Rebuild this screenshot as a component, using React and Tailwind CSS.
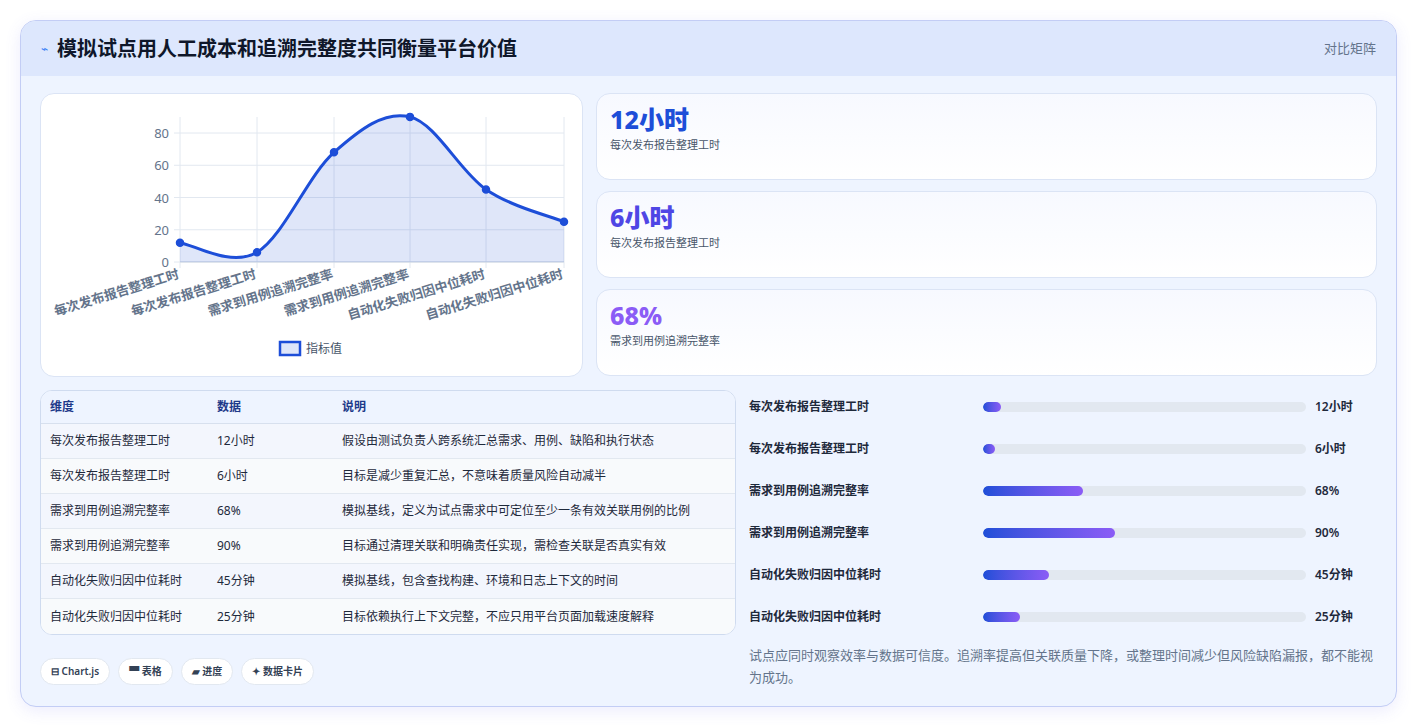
import React from "react";

const F = { fontFamily: '"Noto Sans", "Noto Sans CJK SC", sans-serif' };

const labels = ["每次发布报告整理工时","每次发布报告整理工时","需求到用例追溯完整率","需求到用例追溯完整率","自动化失败归因中位耗时","自动化失败归因中位耗时"];
const vals = [12, 6, 68, 90, 45, 25];
const xs = [139, 216, 293, 369, 445, 523];
const y = (v) => 168 - v * 1.6125;

function Chart() {
  const pts = vals.map((v, i) => [xs[i], y(v)]);
  let d = `M${pts[0][0]},${pts[0][1]}`;
  for (let i = 0; i < pts.length - 1; i++) {
    const p0 = pts[i - 1] || pts[i], p1 = pts[i], p2 = pts[i + 1], p3 = pts[i + 2] || p2;
    const t = 0.17;
    const c1 = [p1[0] + (p2[0] - p0[0]) * t, p1[1] + (p2[1] - p0[1]) * t];
    const c2 = [p2[0] - (p3[0] - p1[0]) * t, p2[1] - (p3[1] - p1[1]) * t];
    d += ` C${c1[0]},${c1[1]} ${c2[0]},${c2[1]} ${p2[0]},${p2[1]}`;
  }
  const area = d + ` L523,168 L139,168 Z`;
  return (
    <svg width="542" height="283" style={F}>
      {[0, 20, 40, 60, 80].map((v) => (
        <g key={v}>
          <line x1="133" x2="523" y1={y(v)} y2={y(v)} stroke="#e2e8f0" />
          <text x="128" y={y(v) + 5} textAnchor="end" fontSize="13" fill="#64748b">{v}</text>
        </g>
      ))}
      {xs.map((x, i) => (
        <line key={i} x1={x} x2={x} y1="23" y2="174" stroke="#e2e8f0" />
      ))}
      <line x1="139" x2="523" y1="168" y2="168" stroke="#cbd5e1" />
      <path d={area} fill="rgba(29,78,216,0.14)" />
      <path d={d} fill="none" stroke="#1d4ed8" strokeWidth="3" />
      {pts.map((p, i) => (
        <circle key={i} cx={p[0]} cy={p[1]} r="3.5" fill="#1d4ed8" stroke="#1d4ed8" strokeWidth="1.5" />
      ))}
      {labels.map((l, i) => (
        <text key={i} x={xs[i]} y="184" fontSize="13" fontWeight="600" fill="#64748b" textAnchor="end" transform={`rotate(-17 ${xs[i]} 184)`}>{l}</text>
      ))}
      <rect x="239" y="248" width="20" height="13" fill="rgba(29,78,216,0.14)" stroke="#1d4ed8" strokeWidth="2.5" />
      <text x="265" y="259" fontSize="12" fill="#475569">指标值</text>
    </svg>
  );
}

const stats = [
  ["12小时", "text-[#1d4ed8]"],
  ["6小时", "text-[#4f46e5]"],
  ["68%", "text-[#8b5cf6]"],
];
const statLabels = ["每次发布报告整理工时", "每次发布报告整理工时", "需求到用例追溯完整率"];

const rows = [
  ["每次发布报告整理工时", "12小时", "假设由测试负责人跨系统汇总需求、用例、缺陷和执行状态"],
  ["每次发布报告整理工时", "6小时", "目标是减少重复汇总，不意味着质量风险自动减半"],
  ["需求到用例追溯完整率", "68%", "模拟基线，定义为试点需求中可定位至少一条有效关联用例的比例"],
  ["需求到用例追溯完整率", "90%", "目标通过清理关联和明确责任实现，需检查关联是否真实有效"],
  ["自动化失败归因中位耗时", "45分钟", "模拟基线，包含查找构建、环境和日志上下文的时间"],
  ["自动化失败归因中位耗时", "25分钟", "目标依赖执行上下文完整，不应只用平台页面加载速度解释"],
];
const barW = [18, 12, 100, 132, 66, 37];

export default function App() {
  return (
    <div className="w-[1417px] h-[727px] bg-white pt-[20px] pl-[20px]" style={F}>
      <div className="w-[1377px] h-[687px] rounded-[16px] border border-[#c3cdf5] bg-[#eef4ff] overflow-hidden shadow-[0_4px_16px_rgba(99,102,241,0.12)]">
        <div className="h-[55px] bg-[#dde7fd] flex items-center justify-between px-[20px]">
          <div className="flex items-center gap-[9px]">
            <span className="text-[12px] text-[#3b82f6]">⌁</span>
            <span className="text-[20px] font-bold text-[#0f172a]">模拟试点用人工成本和追溯完整度共同衡量平台价值</span>
          </div>
          <span className="text-[13px] text-[#64748b]">对比矩阵</span>
        </div>
        <div className="px-[19px] pt-[17px]">
          <div className="flex gap-[13px]">
            <div className="w-[543px] h-[284px] bg-white rounded-[14px] border border-[#dbe4f5] overflow-hidden">
              <Chart />
            </div>
            <div className="flex-1 flex flex-col gap-[11px]">
              {stats.map(([v, c], i) => (
                <div key={i} className="h-[87px] rounded-[14px] border border-[#dbe4f5] bg-gradient-to-b from-[#f7f9ff] to-white px-[13px] pt-[9px]">
                  <div className={`text-[25px] font-extrabold leading-[32px] ${c}`}>{v}</div>
                  <div className="text-[11px] text-[#475569] mt-[2px]">{statLabels[i]}</div>
                </div>
              ))}
            </div>
          </div>
          <div className="flex gap-[13px] mt-[13px]">
            <div className="w-[696px]">
              <div className="rounded-[12px] border border-[#cfdbef] overflow-hidden bg-white text-[12px]">
                <div className="flex h-[33px] items-center bg-[#eef4ff] border-b border-[#d7e0ee] text-[#1e3a8a] font-semibold">
                  <div className="w-[176px] pl-[9px]">维度</div>
                  <div className="w-[125px]">数据</div>
                  <div>说明</div>
                </div>
                {rows.map((r, i) => (
                  <div key={i} className={`flex h-[35px] items-center text-[#1e293b] ${i < 5 ? "border-b border-[#e2e8f0]" : ""} ${i % 2 ? "bg-[#f8fafc]" : "bg-[#f3f6fd]"}`}>
                    <div className="w-[176px] pl-[9px]">{r[0]}</div>
                    <div className="w-[125px]">{r[1]}</div>
                    <div>{r[2]}</div>
                  </div>
                ))}
              </div>
              <div className="flex gap-[8px] mt-[23px] text-[10px] text-[#334155] font-semibold">
                <span className="px-[10px] h-[27px] flex items-center rounded-full bg-white border border-[#e2e8f0]">⊟ Chart.js</span>
                <span className="px-[10px] h-[27px] flex items-center rounded-full bg-white border border-[#e2e8f0]">▀ 表格</span>
                <span className="px-[10px] h-[27px] flex items-center rounded-full bg-white border border-[#e2e8f0]">▰ 进度</span>
                <span className="px-[10px] h-[27px] flex items-center rounded-full bg-white border border-[#e2e8f0]">✦ 数据卡片</span>
              </div>
            </div>
            <div className="flex-1 -mt-[4px]">
              <div className="flex flex-col">
                {rows.map((r, i) => (
                  <div key={i} className="h-[42px] flex items-center text-[12px] font-semibold text-[#1e293b]">
                    <div className="w-[234px]">{r[0]}</div>
                    <div className="w-[323px] h-[10px] rounded-full bg-[#e2e8f0] overflow-hidden">
                      <div className="h-full rounded-full bg-gradient-to-r from-[#1d4ed8] to-[#8b5cf6]" style={{ width: barW[i] }} />
                    </div>
                    <div className="pl-[9px]">{r[1]}</div>
                  </div>
                ))}
              </div>
              <p className="mt-[6px] text-[13px] leading-[22px] text-[#64748b]">试点应同时观察效率与数据可信度。追溯率提高但关联质量下降，或整理时间减少但风险缺陷漏报，都不能视为成功。</p>
            </div>
          </div>
        </div>
      </div>
    </div>
  );
}
